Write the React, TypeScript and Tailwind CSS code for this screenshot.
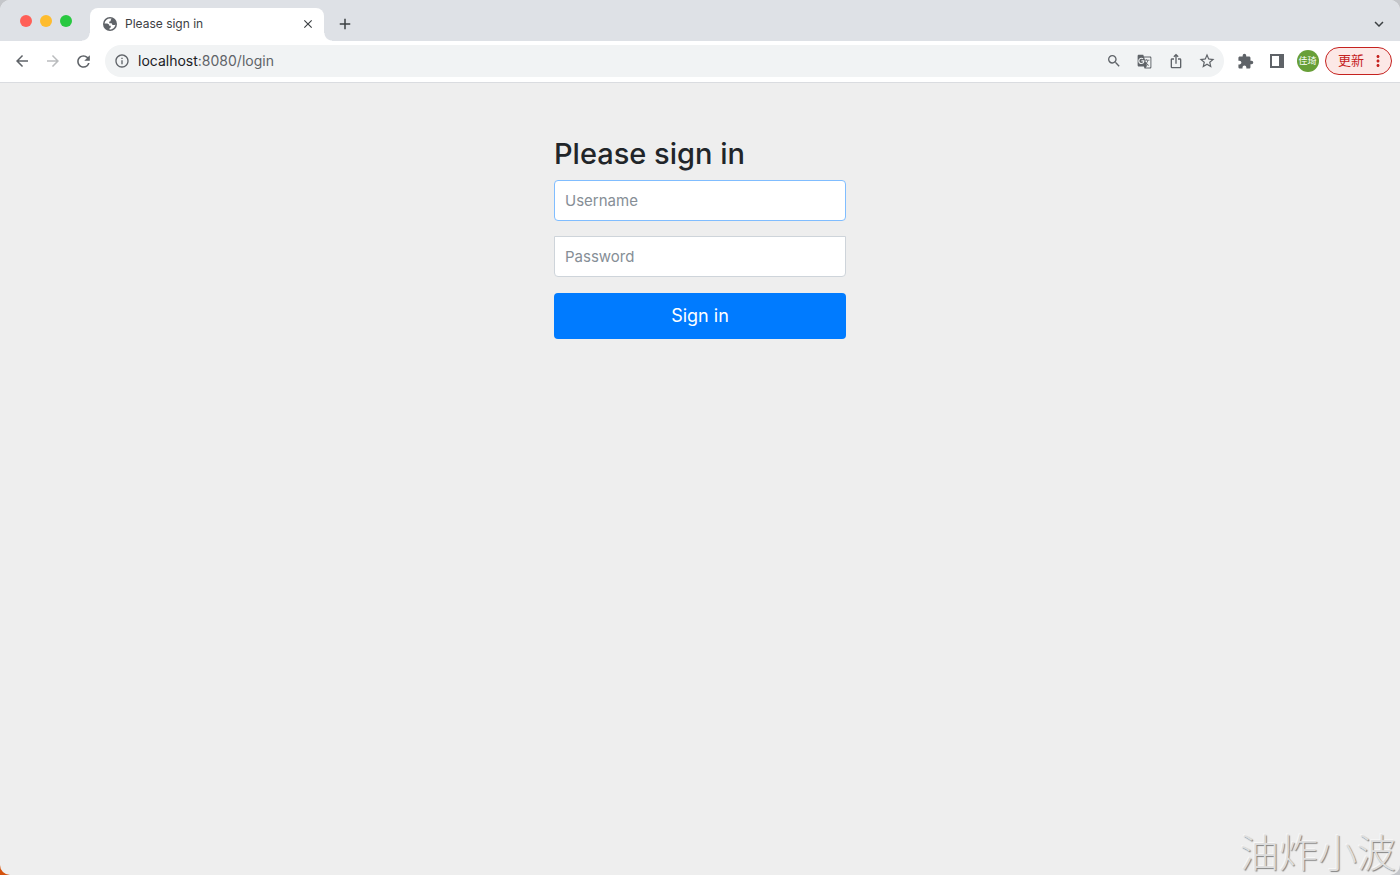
import React, { useState } from 'react';
import {
  MdAdd,
  MdArrowBack,
  MdArrowForward,
  MdClose,
  MdExtension,
  MdGTranslate,
  MdInfoOutline,
  MdIosShare,
  MdKeyboardArrowDown,
  MdMoreVert,
  MdRefresh,
  MdSearch,
  MdStarBorder,
} from 'react-icons/md';

interface IconButtonProps {
  label: string;
  className?: string;
  children: React.ReactNode;
}

function IconButton({ label, className = '', children }: IconButtonProps) {
  return (
    <button
      type="button"
      aria-label={label}
      className={`flex h-6 w-[31px] shrink-0 items-center justify-center ${className}`}
    >
      {children}
    </button>
  );
}

function GlobeIcon() {
  return (
    <svg width="14" height="14" viewBox="0 0 28 28" aria-hidden="true">
      <circle cx="14" cy="14" r="14" fill="#5f6368" />
      <path
        d="M14.5 3C8 3 4 7 3 13h5c3 0 4.500 2 4.500 4.500h3V21c-1 1-2.500 1-2.500 2v2c6 0 11-4 12-10-1.500 1-3 1.500-5 1-2-.6-2.500-2-2.500-3.500h-5V9c2.500 0 3-1 3-2.500 0-1.500 1-2.500 2-3z"
        fill="#fff"
      />
    </svg>
  );
}

function SidePanelIcon() {
  return (
    <svg width="14" height="14" viewBox="0 0 14 14" aria-hidden="true">
      <path
        fillRule="evenodd"
        d="M0 0h14v14H0zM2 2v10h7V2z"
        fill="#5f6368"
      />
    </svg>
  );
}

function TabStrip() {
  return (
    <div className="flex h-[41px] items-end bg-[#dee1e6] pr-3">
      <div className="flex w-[90px] shrink-0 gap-2 self-center pl-5">
        <span className="h-3 w-3 rounded-full bg-[#ff5f57]" />
        <span className="h-3 w-3 rounded-full bg-[#febc2e]" />
        <span className="h-3 w-3 rounded-full bg-[#28c840]" />
      </div>
      <div className="relative flex h-[33px] w-[234px] items-center rounded-t-lg bg-white pr-2 pb-px pl-[13px] text-[#3c4043]">
        {/* curved feet of the active tab */}
        <span className="absolute bottom-0 -left-2 h-2 w-2 bg-[radial-gradient(circle_at_0_0,#dee1e6_7px,#fff_8px)]" />
        <span className="absolute -right-2 bottom-0 h-2 w-2 bg-[radial-gradient(circle_at_100%_0,#dee1e6_7px,#fff_8px)]" />
        <GlobeIcon />
        <span className="ml-2 flex-1 text-xs">Please sign in</span>
        <button type="button" aria-label="Close tab" className="p-px">
          <MdClose size={14} />
        </button>
      </div>
      <button
        type="button"
        aria-label="New tab"
        className="ml-3 flex h-[33px] items-center pb-px text-[#3c4043]"
      >
        <MdAdd size={18} />
      </button>
      <button
        type="button"
        aria-label="Search tabs"
        className="ml-auto flex h-[33px] items-center pb-px text-[#3c4043]"
      >
        <MdKeyboardArrowDown size={18} />
      </button>
    </div>
  );
}

function AddressInput() {
  const [address, setAddress] = useState('localhost:8080/login');
  const host = address.split(/[:/]/)[0];

  return (
    <div className="relative ml-2 min-w-0 flex-1 text-sm">
      {/* host is darker than the port and path, the input on top only takes the typing */}
      <div aria-hidden="true" className="overflow-hidden whitespace-pre">
        <span className="text-[#202124]">{host}</span>
        <span>{address.slice(host.length)}</span>
      </div>
      <input
        type="text"
        aria-label="Address"
        value={address}
        onChange={(e) => setAddress(e.target.value)}
        className="absolute inset-0 w-full bg-transparent text-transparent caret-[#202124] outline-none"
      />
    </div>
  );
}

function Toolbar() {
  return (
    <div className="flex h-[42px] items-center border-b border-[#dadce0] bg-white pr-2 pb-px pl-[6px] text-[#5f6368]">
      <IconButton label="Back">
        <MdArrowBack size={18} />
      </IconButton>
      <IconButton label="Forward" className="text-[#babcbe]">
        <MdArrowForward size={18} />
      </IconButton>
      <IconButton label="Reload">
        <MdRefresh size={19} />
      </IconButton>
      <div className="ml-[6px] flex h-8 flex-1 items-center rounded-full bg-[#f1f3f4] pr-[2px] pl-[9px]">
        <MdInfoOutline size={16} className="shrink-0" />
        <AddressInput />
        <IconButton label="Zoom">
          <MdSearch size={16} />
        </IconButton>
        <IconButton label="Translate this page">
          <MdGTranslate size={15} />
        </IconButton>
        <IconButton label="Share">
          <MdIosShare size={16} />
        </IconButton>
        <IconButton label="Bookmark">
          <MdStarBorder size={18} />
        </IconButton>
      </div>
      <IconButton label="Extensions" className="ml-[6px]">
        <MdExtension size={17} />
      </IconButton>
      <IconButton label="Side panel">
        <SidePanelIcon />
      </IconButton>
      <IconButton label="Profile">
        <span className="flex h-[22px] w-[22px] items-center justify-center rounded-full bg-[#689f38] text-[9px] text-white">
          佳琦
        </span>
      </IconButton>
      <button
        type="button"
        className="ml-[2px] flex h-7 w-[67px] items-center justify-between rounded-full border border-[#c5221f] bg-[#fce8e6] pr-1 pl-3 text-[13px] text-[#c5221f]"
      >
        更新
        <MdMoreVert size={18} />
      </button>
    </div>
  );
}

function LoginForm() {
  const [username, setUsername] = useState('');
  const [password, setPassword] = useState('');

  return (
    <form
      onSubmit={(e) => e.preventDefault()}
      className="mx-auto flex w-full max-w-[292px] flex-col pt-[53px]"
    >
      <h2 className="mb-2 text-[29px] leading-9 font-medium text-[#212529]">
        Please sign in
      </h2>
      <input
        type="text"
        aria-label="Username"
        placeholder="Username"
        value={username}
        onChange={(e) => setUsername(e.target.value)}
        className="mb-[15px] h-[41px] rounded border border-[#80bdff] bg-white px-[10px] text-[15px] text-[#495057] outline-none placeholder:text-[#868e96]"
      />
      <input
        type="password"
        aria-label="Password"
        placeholder="Password"
        value={password}
        onChange={(e) => setPassword(e.target.value)}
        className="mb-4 h-[41px] rounded rounded-t-none border border-[#ced4da] bg-white px-[10px] text-[15px] text-[#495057] outline-none placeholder:text-[#868e96]"
      />
      <button
        type="submit"
        className="h-[46px] rounded bg-[#007bff] text-lg text-white"
      >
        Sign in
      </button>
    </form>
  );
}

export default function App() {
  return (
    <div className="flex min-h-screen bg-[linear-gradient(to_top_right,#d4520c_2%,#c4c6ca_3%)] font-[Inter,'Noto_Sans_CJK_SC',sans-serif] antialiased">
      <div className="flex flex-1 flex-col overflow-hidden rounded-[10px] bg-[#eeeeee]">
        <TabStrip />
        <Toolbar />
        <main className="flex-1">
          <LoginForm />
        </main>
        <footer className="self-end pr-1 text-[39px] leading-[44px] font-light text-[#dcdcdc] opacity-90 [text-shadow:1px_1px_1px_#777,-1px_-1px_0_#f8f8f8]">
          油炸小波
        </footer>
      </div>
    </div>
  );
}
